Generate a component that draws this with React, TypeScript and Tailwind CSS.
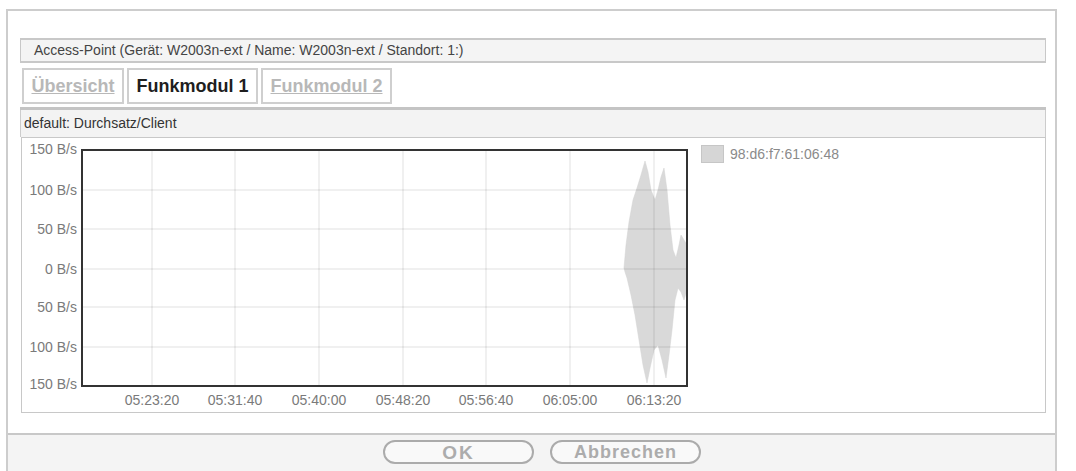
import React from 'react';

const gridY = [190, 229, 269, 307, 347];
const gridX = [153, 236, 320, 404, 487, 571, 655];
const times = ['05:23:20', '05:31:40', '05:40:00', '05:48:20', '05:56:40', '06:05:00', '06:13:20'];
const yLabels: [string, number][] = [
  ['150 B/s', 154],
  ['100 B/s', 195],
  ['50 B/s', 234],
  ['0 B/s', 274],
  ['50 B/s', 312],
  ['100 B/s', 352],
  ['150 B/s', 389],
];

// Durchsatz-Kurve (oben und unten gespiegelt)
const upper = [
  [625, 268], [627, 245], [630, 222], [634, 200], [638, 188], [642, 175], [646, 161],
  [649, 172], [652, 190], [656, 200], [659, 190], [662, 177], [665, 168], [668, 190],
  [671, 225], [674, 250], [677, 258], [680, 245], [682, 235], [685, 240], [688, 245],
];
const lower = [
  [688, 290], [685, 300], [682, 292], [679, 288], [676, 300], [673, 330], [670, 355],
  [667, 378], [663, 360], [659, 345], [655, 350], [651, 368], [648, 383], [644, 365],
  [640, 340], [636, 315], [632, 295], [628, 278], [626, 272],
];
const points = [...upper, ...lower].map(([x, y]) => `${x},${y}`).join(' ');

const Chart = () => (
  <svg width={672} height={274} viewBox="23 138 672 274" className="block shrink-0">
    <rect x={83} y={150} width={605} height={236} fill="#ffffff" />
    <polygon points={points} fill="#d9d9d9" stroke="#d2d2d2" strokeWidth={0.5} />
    {gridY.map((y) => (
      <line key={y} x1={84} x2={687} y1={y} y2={y} stroke="rgba(0,0,0,0.12)" strokeWidth={1} />
    ))}
    {gridX.map((x) => (
      <line key={x} x1={x} x2={x} y1={151} y2={385} stroke="rgba(0,0,0,0.12)" strokeWidth={1} />
    ))}
    <rect x={83} y={150} width={605} height={236} fill="none" stroke="#333333" strokeWidth={2} />
    {yLabels.map(([label, y], i) => (
      <text
        key={i}
        x={78}
        y={y}
        textAnchor="end"
        fontSize={14}
        fill="#7a7a7a"
        fontFamily="'Liberation Sans', Arial, sans-serif"
      >
        {label}
      </text>
    ))}
    {gridX.map((x, i) => (
      <text
        key={x}
        x={x}
        y={405}
        textAnchor="middle"
        fontSize={14}
        fill="#7a7a7a"
        fontFamily="'Liberation Sans', Arial, sans-serif"
      >
        {times[i]}
      </text>
    ))}
  </svg>
);

export default function App() {
  return (
    <div className="w-[1076px] h-[471px] bg-white pt-[9px] pl-[6px] pr-[19px] font-['Liberation_Sans',Arial,sans-serif] overflow-hidden">
      <div className="h-[462px] border-2 border-b-0 border-[#cdcdcd] flex flex-col">
        <div className="flex-1 pt-[27px] pl-[12px] pr-[9px]">
          {/* Kopfzeile */}
          <div className="h-[25px] border border-t-2 border-b-2 border-[#c8c8c8] bg-[#f4f4f4] pl-[13px] flex items-center text-[14px] text-[#444444]">
            Access-Point (Gerät: W2003n-ext / Name: W2003n-ext / Standort: 1:)
          </div>

          {/* Reiter */}
          <div className="mt-[5px] ml-[2px] flex gap-[3px]">
            <div className="w-[102px] h-[36px] border-2 border-[#cfcfcf] bg-white flex items-center justify-center text-[18px] font-bold text-[#b8b8b8] underline">
              Übersicht
            </div>
            <div className="w-[131px] h-[36px] border-2 border-[#cfcfcf] bg-white flex items-center justify-center text-[18px] font-bold text-[#1e1e1e]">
              Funkmodul 1
            </div>
            <div className="w-[131px] h-[36px] border-2 border-[#cfcfcf] bg-white flex items-center justify-center text-[18px] font-bold text-[#b8b8b8] underline">
              Funkmodul 2
            </div>
          </div>

          {/* Diagramm */}
          <div className="mt-[3px] border-t-[3px] border-[#c4c4c4]">
            <div className="h-[27px] border-x border-[#cccccc] bg-[#f3f3f3] pl-[3px] flex items-center text-[14px] text-[#333333]">
              default: Durchsatz/Client
            </div>
            <div className="h-[276px] border border-[#c8c8c8] bg-white ml-[1px] flex">
              <Chart />
              <div className="ml-[7px] pt-[7px] flex items-start">
                <div className="w-[23px] h-[18px] bg-[#d6d6d6] border border-[#c6c6c6]" />
                <div className="ml-[6px] text-[14px] leading-[18px] text-[#8a8a8a]">98:d6:f7:61:06:48</div>
              </div>
            </div>
          </div>
        </div>

        {/* Fußzeile */}
        <div className="h-[38px] border-t-2 border-[#c8c8c8] bg-[#f4f4f4] flex justify-center items-start pt-[5px] pl-[21px] gap-[16px]">
          <button className="w-[151px] h-[24px] rounded-full border-2 border-[#ababab] bg-[#f9f9f9] text-[19px] leading-none font-bold text-[#acacac] tracking-[2px] flex items-center justify-center">
            OK
          </button>
          <button className="w-[151px] h-[24px] rounded-full border-2 border-[#ababab] bg-[#f9f9f9] text-[18px] leading-none font-bold text-[#acacac] tracking-[1px] flex items-center justify-center">
            Abbrechen
          </button>
        </div>
      </div>
    </div>
  );
}
